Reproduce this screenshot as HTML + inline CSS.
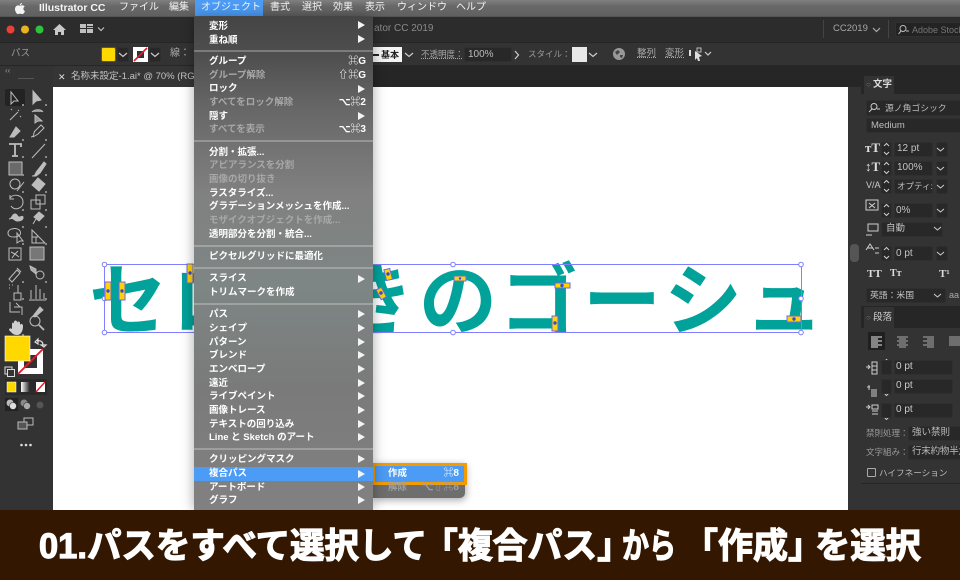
<!DOCTYPE html>
<html lang="ja"><head><meta charset="utf-8"><title>Illustrator</title>
<style>
html,body{margin:0;padding:0;background:#333}
#p{position:relative;width:960px;height:580px;overflow:hidden;background:#323232;font-family:"Liberation Sans","Noto Sans CJK JP",sans-serif;font-size:10px;color:#ccc;filter:blur(.3px)}
#p div,#p span.a{position:absolute}
.t{position:absolute;white-space:nowrap;line-height:14px}
.mb{top:1px;color:#f4f4f4;font-size:10px;font-weight:bold}
.m{position:absolute;left:15px;margin-top:1px;white-space:nowrap;line-height:14px;font-size:9.5px;font-weight:bold;color:#fff}
.d{color:#a8a8a8}
.s{position:absolute;right:7px;margin-top:1px;white-space:nowrap;line-height:14px;font-size:10px;font-weight:bold;color:#fff}
.ar{position:absolute;left:164px;width:0;height:0;border-left:7px solid #f4f4f4;border-top:4px solid transparent;border-bottom:4px solid transparent}
.sep{position:absolute;left:0;width:179px;height:2px;background:rgba(255,255,255,.26)}
.f{background:#282828;border:1px solid #2f2f2f;box-sizing:border-box;border-radius:2px}
.rt{position:absolute;white-space:nowrap;line-height:14px;font-size:10px;color:#c8c8c8}
</style></head><body>
<div id="p">

<!-- tabs row & canvas -->
<div style="left:0;top:66px;width:960px;height:21px;background:#262626"></div>
<div style="left:53px;top:66px;width:320px;height:21px;background:#353535"></div>
<div class="t" style="left:58px;top:70px;font-size:9px;color:#ddd">✕</div>
<div class="t" style="left:71px;top:70px;font-size:9.5px;color:#c4c4c4">名称未設定-1.ai* @ 70% (RGB/GPU プレビュー)</div>
<div style="left:53px;top:87px;width:795px;height:423px;background:#fff"></div>
<div style="left:848px;top:87px;width:13px;height:423px;background:#333"></div>
<div style="left:850px;top:244px;width:9px;height:18px;background:#555;border-radius:4px"></div>

<!-- artwork -->
<svg style="position:absolute;left:0;top:0" width="960" height="580" viewBox="0 0 960 580">
<text y="328" x="89 172 255 336 419 500 583 664 745" font-size="78" font-family="Liberation Sans,Noto Sans CJK JP,sans-serif" font-weight="700" fill="#00a29a">セロ弾きのゴーシュ</text>
<rect x="104.500" y="264.500" width="697" height="68" fill="none" stroke="#7f7fff" stroke-width="1"/>
<g fill="#fff" stroke="#7f7fff" stroke-width="1">
<circle cx="104.500" cy="264.500" r="2.300"/><circle cx="104.500" cy="298.500" r="2.300"/><circle cx="104.500" cy="332.500" r="2.300"/>
<circle cx="453" cy="264.500" r="2.300"/><circle cx="453" cy="332.500" r="2.300"/>
<circle cx="801" cy="264.500" r="2.300"/><circle cx="801" cy="298.500" r="2.300"/><circle cx="801" cy="332.500" r="2.300"/>
</g>
<g fill="#ffd400" stroke="#6a6ae8" stroke-width="1">
<rect x="105" y="282" width="6" height="18"/><rect x="119" y="282" width="6" height="18"/><rect x="187" y="264" width="6" height="19"/>
<rect x="385" y="269" width="6" height="11" transform="rotate(-14 388 274)"/><rect x="378" y="288" width="6" height="11" transform="rotate(-28 381 293)"/>
<rect x="454" y="276" width="12" height="5"/><rect x="555" y="283" width="15" height="5"/><rect x="552" y="316" width="6" height="15"/><rect x="787" y="316" width="14" height="6"/>
</g>
<g fill="#3a4ad8">
<circle cx="108" cy="291" r="1.700"/><circle cx="122" cy="291" r="1.700"/><circle cx="190" cy="273" r="1.700"/><circle cx="388" cy="274" r="1.700"/><circle cx="381" cy="293" r="1.700"/><circle cx="460" cy="278.500" r="1.200"/><circle cx="562" cy="285.500" r="1.700"/><circle cx="555" cy="323" r="1.700"/><circle cx="794" cy="319" r="1.700"/>
</g>
</svg>

<!-- app bar -->
<div style="left:0;top:17px;width:960px;height:25px;background:#2c2c2c"></div>
<div style="left:0;top:42px;width:960px;height:24px;background:#333;border-top:1px solid #262626;border-bottom:1px solid #262626;box-sizing:border-box"></div>
<svg style="position:absolute;left:0;top:17px" width="120" height="25"><circle cx="10.500" cy="12.500" r="4" fill="#e8413a"/><circle cx="25" cy="12.500" r="4" fill="#e9b320"/><circle cx="39.500" cy="12.500" r="4" fill="#2fc23c"/><path d="M53 13l6.500-6 6.500 6h-2v5h-3v-3h-3v3h-3v-5z" fill="#c8c8c8"/><path d="M80 7h6v4h-6zM87 7h6v2h-6zM87 10h6v1h-6zM80 12h6v4h-6zM87 12h6v4h-6z" fill="#c0c0c0"/><path d="M98 10.500l3 3 3-3" fill="none" stroke="#bbb" stroke-width="1.200"/></svg>
<div class="t" style="left:374px;top:22px;color:#8a8a8a;font-size:10px">ator CC 2019</div>
<div style="left:823px;top:20px;width:1px;height:18px;background:#444"></div>
<div class="t" style="left:833px;top:22px;color:#a8a8a8;font-size:9.500px">CC2019</div>
<svg style="position:absolute;left:872px;top:26px" width="10" height="8"><path d="M1 2l3.500 3.500L8 2" fill="none" stroke="#aaa" stroke-width="1.200"/></svg>
<div style="left:888px;top:20px;width:1px;height:18px;background:#444"></div>
<div class="f" style="left:895px;top:22px;width:70px;height:15px;background:#232323;border-color:#303030"></div>
<svg style="position:absolute;left:897px;top:24px" width="14" height="12"><circle cx="6" cy="4.500" r="3" fill="none" stroke="#bbb"/><path d="M4 7L1.500 10M9 7h3" stroke="#bbb" fill="none"/></svg>
<div class="t" style="left:912px;top:23px;color:#777;font-size:9px">Adobe Stock</div>

<!-- control bar -->
<div class="t" style="left:11px;top:47px;color:#999;font-size:9.500px">パス</div>
<div class="f" style="left:101px;top:47px;width:15px;height:15px;background:#ffd800;border-color:#555"></div>
<div class="f" style="left:117px;top:47px;width:12px;height:15px"></div>
<svg style="position:absolute;left:118px;top:52px" width="10" height="7"><path d="M1 1l4 3.500L9 1" fill="none" stroke="#ccc" stroke-width="1.200"/></svg>
<svg style="position:absolute;left:133px;top:47px" width="15" height="15"><rect width="15" height="15" fill="#fff"/><rect x="4" y="4" width="7" height="7" fill="#333"/><path d="M1 14L14 1" stroke="#e5192b" stroke-width="1.600"/></svg>
<div class="f" style="left:149px;top:47px;width:12px;height:15px"></div>
<svg style="position:absolute;left:150px;top:52px" width="10" height="7"><path d="M1 1l4 3.500L9 1" fill="none" stroke="#ccc" stroke-width="1.200"/></svg>
<div class="t" style="left:170px;top:47px;color:#aaa;font-size:10px">線：</div>
<div style="left:372px;top:47px;width:30px;height:15px;background:#f4f4f4"></div>
<div class="t" style="left:381px;top:48px;color:#222;font-size:9px;font-weight:bold">基本</div>
<div style="left:373px;top:54px;width:6px;height:2px;background:#222"></div>
<svg style="position:absolute;left:404px;top:52px" width="10" height="7"><path d="M1 1l4 3.500L9 1" fill="none" stroke="#ccc" stroke-width="1.200"/></svg>
<div class="t" style="left:421px;top:47px;color:#a8a8a8;font-size:8.500px;text-decoration:underline dotted">不透明度：</div>
<div class="f" style="left:464px;top:47px;width:48px;height:15px"></div>
<div class="t" style="left:468px;top:48px;color:#bbb;font-size:10px">100%</div>
<svg style="position:absolute;left:513px;top:50px" width="8" height="10"><path d="M2 1l3.500 4L2 9" fill="none" stroke="#ccc" stroke-width="1.200"/></svg>
<div class="t" style="left:528px;top:47px;color:#999;font-size:8.500px">スタイル：</div>
<div style="left:572px;top:47px;width:15px;height:15px;background:#e8e8e8"></div>
<svg style="position:absolute;left:588px;top:52px" width="10" height="7"><path d="M1 1l4 3.500L9 1" fill="none" stroke="#ccc" stroke-width="1.200"/></svg>
<svg style="position:absolute;left:612px;top:47px" width="14" height="14"><circle cx="7" cy="7" r="6" fill="#999"/><path d="M3 5l3-2 2 2-3 3zM8 8l3 0-1 3-2-1z" fill="#444"/></svg>
<div class="t" style="left:637px;top:47px;color:#aaa;font-size:9.500px;text-decoration:underline dotted">整列</div>
<div class="t" style="left:665px;top:47px;color:#aaa;font-size:9.500px;text-decoration:underline dotted">変形</div>
<svg style="position:absolute;left:688px;top:47px" width="26" height="15"><path d="M1 3h2v6H1zM7 4l7 5-3 1 1 4-2 0-1-3-2 2z" fill="#ddd"/><rect x="9" y="1" width="4" height="4" fill="none" stroke="#bbb"/><path d="M17 5l3 3 3-3" fill="none" stroke="#ccc" stroke-width="1.200"/></svg>

<!-- left toolbar -->
<div style="left:0;top:66px;width:53px;height:444px;background:#333"></div>
<div class="t" style="left:5px;top:64px;font-size:8px;color:#999">‹‹</div>
<div style="left:18px;top:78px;width:16px;height:1px;background:#555"></div>
<div style="left:5px;top:89px;width:20px;height:17px;background:#232323;border-radius:2px"></div>
<svg style="position:absolute;left:0;top:85px" width="53" height="380" viewBox="0 0 53 380" fill="none" stroke="#bdbdbd" stroke-width="1">
<path d="M11 7l0 12 3-3 4 0z"/><path d="M33 6l0 13 3-3 5-1z" fill="#bdbdbd"/>
<path d="M10 35l8-8M18 25l1 1M11 24l1 1M20 31l1 1"/><path d="M32 27c3-3 9-3 11 0M35 30l0 8 3-2 4 0z" fill="#999"/>
<path d="M10 52l6-10 4 4-6 6z" fill="#bdbdbd"/><path d="M31 52c4 0 2-5 4-6l6-6 3 3-6 6-5 3"/>
<path d="M9 59h12v3M15 59v12M12 71h6" stroke-width="1.800"/><path d="M32 73l13-14"/>
<rect x="9" y="77" width="13" height="13" fill="#6a6a6a"/><path d="M32 91c4 0 3-3 5-5l7-9 2 2-6 9-4 3z" fill="#bdbdbd"/>
<circle cx="15" cy="99" r="5" /><path d="M17 106l7-9"/><path d="M32 100l6-7 7 6-6 7z" fill="#bdbdbd"/>
<path d="M10 113c4-5 13-3 13 4s-9 9-12 4M10 110v4h4"/><rect x="31" y="115" width="9" height="9"/><rect x="36" y="110" width="9" height="9"/>
<path d="M9 134c3 0 3-5 6-5s2 4 5 3 3-1 3 1-3 3-6 3-3-4-8-2z" fill="#bdbdbd"/><path d="M34 132l5-5 5 4-5 5zM36 134l-3 5" fill="#bdbdbd"/>
<path d="M8 148c0-5 10-6 12-2s-2 6-6 6-6-1-6-4zM17 148v10l3-2 3 0z"/><path d="M32 158v-13l13 13zM32 152h6M36 152v6"/>
<rect x="9" y="163" width="12" height="12"/><path d="M11 167l4 2 3-3M12 173l3-4 4 3"/><rect x="30" y="162" width="14" height="13" fill="#777"/>
<path d="M9 194l8-9 3 3-8 9zM17 183l4 4"/><path d="M30 181l6 3v5l-5-4z" fill="#aaa"/><circle cx="40" cy="190" r="4"/>
<path d="M18 200v8M14 208h7v7h-7z" /><path d="M9 200h1M12 200h1M9 203h1"/><path d="M31 214v-9M36 214v-14M40 214v-10M44 214v-6M29 215h17"/>
<path d="M10 217v10h10M14 222h8v8M20 222l-4-4"/><path d="M33 231l7-9 3 3-8 7z" fill="#bdbdbd"/>
<path d="M12 246v-7c0-2 2-2 2 0v-2c0-2 3-2 3 0v1c0-2 3-2 3 0v2c1-2 3-1 3 1 0 5-2 9-6 9s-5-2-8-5c0-2 2-2 3-1z" fill="#cfcfcf" stroke="none"/><circle cx="35" cy="236" r="5"/><path d="M39 240l5 5" stroke-width="1.800"/>
</svg>
<svg style="position:absolute;left:0;top:85px" width="53" height="260" fill="#8a8a8a"><path d="M22 19h2v2h-2zM45 19h2v2h-2zM22 54h2v2h-2zM45 54h2v2h-2zM22 71h2v2h-2zM45 71h2v2h-2zM22 89h2v2h-2zM45 89h2v2h-2zM22 106h2v2h-2zM45 106h2v2h-2zM22 124h2v2h-2zM45 124h2v2h-2zM22 141h2v2h-2zM45 141h2v2h-2zM22 158h2v2h-2zM45 158h2v2h-2zM22 196h2v2h-2zM45 196h2v2h-2zM22 213h2v2h-2zM45 213h2v2h-2zM22 249h2v2h-2z"/></svg>

<!-- fill stroke -->
<svg style="position:absolute;left:0;top:330px" width="53" height="125">
<rect x="18" y="19" width="25" height="25" fill="#fff"/><rect x="24" y="25" width="13" height="13" fill="#333"/><path d="M18 44L43 19" stroke="#e5192b" stroke-width="1.800"/>
<rect x="5" y="6" width="25" height="25" fill="#ffd800" stroke="#fff" stroke-width=".6"/>
<path d="M37 11c4-1 6 1 6 4M35 12l3-3v5zM44 17l-3-2h5z" fill="none" stroke="#ddd" stroke-width="1.200"/>
<rect x="5" y="37" width="7" height="7" fill="none" stroke="#ddd"/><rect x="7.500" y="39.500" width="7" height="7" fill="#333" stroke="#ddd"/>
<rect x="5" y="49" width="42" height="16" fill="#2a2a2a"/>
<rect x="7" y="52" width="9" height="10" fill="#ffd800" stroke="#fff" stroke-width=".5"/>
<defs><linearGradient id="g"><stop offset="0" stop-color="#fff"/><stop offset="1" stop-color="#222"/></linearGradient></defs>
<rect x="21" y="52" width="9" height="10" fill="url(#g)"/>
<rect x="36" y="52" width="9" height="10" fill="#fff"/><path d="M36 62l9-10" stroke="#e5192b" stroke-width="1.400"/>
<rect x="5" y="68" width="13" height="13" fill="#222"/>
<circle cx="10" cy="73" r="3.500" fill="#bbb"/><circle cx="13" cy="76" r="3.500" fill="#ddd" stroke="#333" stroke-width=".6"/>
<circle cx="24" cy="73" r="3.500" fill="#888"/><circle cx="27" cy="76" r="3.500" fill="#aaa" stroke="#333" stroke-width=".6"/>
<circle cx="40" cy="75" r="3.500" fill="#555"/>
<rect x="24" y="88" width="9" height="7" fill="#333" stroke="#bbb"/><rect x="18" y="92" width="9" height="7" fill="#555" stroke="#bbb"/>
<circle cx="21.500" cy="115" r="1.300" fill="#ddd"/><circle cx="26" cy="115" r="1.300" fill="#ddd"/><circle cx="30.500" cy="115" r="1.300" fill="#ddd"/>
</svg>

<!-- right panel -->
<div style="left:861px;top:66px;width:99px;height:444px;background:#333"></div>
<div style="left:861px;top:66px;width:99px;height:10px;background:#262626"></div>
<div style="left:861px;top:76px;width:99px;height:18px;background:#262626"></div>
<div style="left:864px;top:76px;width:30px;height:18px;background:#333"></div>
<div class="rt" style="left:866px;top:78px;font-size:8px;color:#777">○</div>
<div class="rt" style="left:873px;top:78px;font-size:9.500px;color:#ddd;font-weight:bold">文字</div>
<div class="f" style="left:866px;top:100px;width:96px;height:16px"></div>
<svg style="position:absolute;left:867px;top:102px" width="16" height="12"><circle cx="7" cy="4.500" r="3" fill="none" stroke="#ccc"/><path d="M5 7L2 10M10 7h3" stroke="#ccc" fill="none"/></svg>
<div class="rt" style="left:885px;top:101px;font-size:8.800px;color:#bbb">源ノ角ゴシック</div>
<div class="f" style="left:866px;top:118px;width:96px;height:15px"></div>
<div class="rt" style="left:871px;top:119px;font-size:9.500px;color:#bbb">Medium</div>

<div class="f" style="left:881px;top:142px;width:11px;height:15px"></div><div class="f" style="left:894px;top:142px;width:39px;height:15px"></div><div class="f" style="left:936px;top:142px;width:12px;height:15px"></div>
<div class="f" style="left:881px;top:161px;width:11px;height:15px"></div><div class="f" style="left:894px;top:161px;width:39px;height:15px"></div><div class="f" style="left:936px;top:161px;width:12px;height:15px"></div>
<div class="f" style="left:881px;top:179px;width:11px;height:15px"></div><div class="f" style="left:894px;top:179px;width:39px;height:15px"></div><div class="f" style="left:936px;top:179px;width:12px;height:15px"></div>
<div class="f" style="left:881px;top:203px;width:11px;height:15px"></div><div class="f" style="left:894px;top:203px;width:39px;height:15px"></div><div class="f" style="left:936px;top:203px;width:12px;height:15px"></div>
<div class="f" style="left:881px;top:222px;width:62px;height:15px"></div>
<div class="f" style="left:881px;top:246px;width:11px;height:15px"></div><div class="f" style="left:894px;top:246px;width:39px;height:15px"></div><div class="f" style="left:936px;top:246px;width:12px;height:15px"></div>
<div class="f" style="left:866px;top:288px;width:80px;height:15px"></div>
<div class="rt" style="left:897px;top:142px;color:#c4c4c4">12 pt</div>
<div class="rt" style="left:897px;top:161px;color:#c4c4c4">100%</div>
<div class="rt" style="left:897px;top:179px;color:#c4c4c4;font-size:8.500px">オプティ:</div>
<div class="rt" style="left:896px;top:204px;color:#c4c4c4">0%</div>
<div class="rt" style="left:886px;top:222px;color:#c4c4c4;font-size:9.500px">自動</div>
<div class="rt" style="left:896px;top:247px;color:#c4c4c4">0 pt</div>
<div class="rt" style="left:870px;top:288px;color:#c4c4c4;font-size:8.800px">英語：米国</div>
<div class="rt" style="left:949px;top:288px;color:#aaa;font-size:9px">aa</div>
<div class="rt" style="left:867px;top:267px;font-family:'Liberation Serif',serif;font-weight:bold;font-size:11px;color:#ddd">TT</div>
<div class="rt" style="left:890px;top:267px;font-family:'Liberation Serif',serif;font-weight:bold;font-size:10px;color:#ddd">Tт</div>
<div class="rt" style="left:939px;top:267px;font-family:'Liberation Serif',serif;font-weight:bold;font-size:11px;color:#ddd">T¹</div>
<div class="rt" style="left:865px;top:141px;font-family:'Liberation Serif',serif;font-weight:bold;font-size:13px;color:#ddd">тT</div>
<div class="rt" style="left:865px;top:160px;font-family:'Liberation Serif',serif;font-weight:bold;font-size:13px;color:#ddd">↕T</div>
<div class="rt" style="left:866px;top:178px;font-size:9px;color:#ccc">V/A</div>
<svg style="position:absolute;left:860px;top:140px" width="100" height="170" fill="none" stroke="#cfcfcf" stroke-width="1">
<path d="M24 6l2.500-2.500L29 6M24 12l2.500 2.500L29 12"/><path d="M24 25l2.500-2.500L29 25M24 31l2.500 2.500L29 31"/><path d="M24 43l2.500-2.500L29 43M24 49l2.500 2.500L29 49"/><path d="M24 67l2.500-2.500L29 67M24 73l2.500 2.500L29 73"/><path d="M24 110l2.500-2.500L29 110M24 116l2.500 2.500L29 116"/>
<path d="M77 8l3.500 3L84 8M77 27l3.500 3L84 27M77 45l3.500 3L84 45M77 69l3.500 3L84 69M74 87l3.500 3L81 87M77 112l3.500 3L84 112M74 154l3.500 3L81 154"/>
<path d="M6 60h12v10H6zM9 63l6 5M15 63l-6 5M8 84h10v7H8zM6 95h6M6 110l4-6 4 6M7 108h6M15 108h4M15 113h4"/>
</svg>

<div style="left:861px;top:306px;width:99px;height:204px;background:#333;border-top:1px solid #262626"></div>
<div style="left:861px;top:307px;width:99px;height:21px;background:#262626"></div>
<div style="left:864px;top:307px;width:30px;height:21px;background:#333"></div>
<div class="rt" style="left:873px;top:311px;font-size:9.500px;color:#ccc">段落</div>
<div class="rt" style="left:866px;top:311px;font-size:8px;color:#777">○</div>
<div style="left:868px;top:332px;width:17px;height:18px;background:#1f1f1f;border-radius:1px"></div>
<svg style="position:absolute;left:860px;top:330px" width="100" height="90" fill="none" stroke="#e8e8e8" stroke-width="1">
<path d="M11 7h11M11 9h7M11 11h11M11 13h7M11 15h11M11 17h7"/>
<path stroke="#aaa" d="M37 7h11M39 9h7M37 11h11M39 13h7M37 15h11M39 17h7M63 7h11M67 9h7M63 11h11M67 13h7M63 15h11M67 17h7M89 7h11M89 9h11M89 11h11M89 13h11M89 15h11"/>
<path stroke="#ccc" d="M6 37h4M8 35l2 2-2 2M12 32h5v12h-5zM12 36h5M12 40h5M7 57h3M9 55v5M11 60h6M11 62h6M11 64h6M11 66h6M6 77h4M8 75l2 2-2 2M12 75h6v4h-6zM12 81h6M12 84h6"/>
<path stroke="#ccc" d="M24 32l2.500-2.500L29 32M24 38l2.500 2.500L29 38M24 57l2.500-2.500L29 57M24 63l2.500 2.500L29 63M24 81l2.500-2.500L29 81M24 87l2.500 2.500L29 87"/>
</svg>
<div class="f" style="left:881px;top:360px;width:11px;height:15px"></div><div class="f" style="left:894px;top:360px;width:59px;height:15px"></div>
<div class="f" style="left:881px;top:379px;width:11px;height:15px"></div><div class="f" style="left:894px;top:379px;width:59px;height:15px"></div>
<div class="f" style="left:881px;top:403px;width:11px;height:15px"></div><div class="f" style="left:894px;top:403px;width:59px;height:15px"></div>
<div class="rt" style="left:896px;top:360px;color:#ccc">0 pt</div>
<div class="rt" style="left:896px;top:379px;color:#ccc">0 pt</div>
<div class="rt" style="left:896px;top:403px;color:#ccc">0 pt</div>
<div class="f" style="left:908px;top:426px;width:60px;height:15px"></div>
<div class="f" style="left:908px;top:445px;width:60px;height:15px"></div>
<div class="rt" style="left:866px;top:426px;font-size:8.500px;color:#999">禁則処理：</div>
<div class="rt" style="left:912px;top:426px;font-size:9.500px;color:#bbb">強い禁則</div>
<div class="rt" style="left:866px;top:445px;font-size:8.500px;color:#999">文字組み：</div>
<div class="rt" style="left:912px;top:445px;font-size:9.500px;color:#bbb;letter-spacing:-.2px">行末約物半角</div>
<div style="left:867px;top:468px;width:7px;height:7px;border:1px solid #aaa;border-radius:1px"></div>
<div class="rt" style="left:879px;top:466px;font-size:8.600px;color:#bbb">ハイフネーション</div>
<div style="left:861px;top:483px;width:99px;height:1px;background:#262626"></div>

<!-- menubar -->
<div style="left:0;top:0;width:960px;height:17px;background:linear-gradient(#808080,#686868 40%,#606060);border-bottom:1px solid #555;box-sizing:border-box"></div>
<svg style="position:absolute;left:14px;top:2px" width="12" height="13"><path d="M8 1c0 1-1 2.300-2.200 2.300C5.700 2.200 6.900 1 8 1zM6 3.700c.7 0 1.300-.5 2.300-.5 1 0 1.900.5 2.400 1.300-2 1.300-1.600 3.800.3 4.600-.5 1.300-1.600 3-2.700 3-.8 0-1.100-.5-2.100-.5s-1.300.5-2.100.5C2.800 12.100 1 9.500 1 7.200c0-2.300 1.500-3.800 3-3.800.8 0 1.400.5 2 .3z" fill="#f4f4f4"/></svg>
<div class="t mb" style="left:39px;font-size:10.500px">Illustrator CC</div>
<div class="t mb" style="left:119px;font-weight:normal">ファイル</div>
<div class="t mb" style="left:169px;font-weight:normal">編集</div>
<div style="left:195px;top:0;width:68px;height:16px;background:#4c9bf5"></div>
<div class="t mb" style="left:201px;font-weight:normal">オブジェクト</div>
<div class="t mb" style="left:270px;font-weight:normal">書式</div>
<div class="t mb" style="left:302px;font-weight:normal">選択</div>
<div class="t mb" style="left:333px;font-weight:normal">効果</div>
<div class="t mb" style="left:365px;font-weight:normal">表示</div>
<div class="t mb" style="left:397px;font-weight:normal">ウィンドウ</div>
<div class="t mb" style="left:456px;font-weight:normal">ヘルプ</div>

<!-- submenu -->
<div style="left:373px;top:463px;width:92px;height:35px;background:#6e6e6e;border-radius:0 0 5px 0;box-shadow:1px 2px 8px rgba(0,0,0,.35)"></div>
<div style="left:372px;top:463px;width:95px;height:22px;background:#4c9bf5;border:3px solid #f59b00;box-sizing:border-box"></div>
<div class="t" style="left:388px;top:467px;color:#fff;font-size:9.500px;font-weight:bold">作成</div>
<div class="t" style="right:501px;top:467px;color:#fff;font-size:10px;font-weight:bold">⌘8</div>
<div class="t" style="left:388px;top:481px;color:#a0a0a0;font-size:9.500px;font-weight:bold">解除</div>
<div class="t" style="right:501px;top:481px;color:#a0a0a0;font-size:10px;font-weight:bold">⌥⇧⌘8</div>

<!-- object menu -->
<div style="left:194px;top:17px;width:179px;height:493px;background:linear-gradient(#454545 0,#4f4f4f 8%,#666 18%,#818181 36%,#7d8684 55%,#7a7a7a 75%,#818181 100%);box-shadow:0 0 12px rgba(0,0,0,.35)">
<span class="m" style="top:2px">変形</span><i class="ar" style="top:4px"></i>
<span class="m" style="top:16px">重ね順</span><i class="ar" style="top:18px"></i>
<i class="sep" style="top:33px"></i>
<span class="m" style="top:37px">グループ</span><span class="s" style="top:37px">⌘G</span>
<span class="m d" style="top:51px">グループ解除</span><span class="s d" style="top:51px">⇧⌘G</span>
<span class="m" style="top:64px">ロック</span><i class="ar" style="top:68px"></i>
<span class="m d" style="top:78px">すべてをロック解除</span><span class="s d" style="top:78px">⌥⌘2</span>
<span class="m" style="top:92px">隠す</span><i class="ar" style="top:95px"></i>
<span class="m d" style="top:105px">すべてを表示</span><span class="s d" style="top:105px">⌥⌘3</span>
<i class="sep" style="top:123px"></i>
<span class="m" style="top:128px">分割・拡張...</span>
<span class="m d" style="top:141px">アピアランスを分割</span>
<span class="m d" style="top:155px">画像の切り抜き</span>
<span class="m" style="top:169px">ラスタライズ...</span>
<span class="m" style="top:182px">グラデーションメッシュを作成...</span>
<span class="m d" style="top:196px">モザイクオブジェクトを作成...</span>
<span class="m" style="top:210px">透明部分を分割・統合...</span>
<i class="sep" style="top:228px"></i>
<span class="m" style="top:232px">ピクセルグリッドに最適化</span>
<i class="sep" style="top:250px"></i>
<span class="m" style="top:254px">スライス</span><i class="ar" style="top:258px"></i>
<span class="m" style="top:268px">トリムマークを作成</span>
<i class="sep" style="top:286px"></i>
<span class="m" style="top:290px">パス</span><i class="ar" style="top:293px"></i>
<span class="m" style="top:304px">シェイプ</span><i class="ar" style="top:307px"></i>
<span class="m" style="top:318px">パターン</span><i class="ar" style="top:321px"></i>
<span class="m" style="top:331px">ブレンド</span><i class="ar" style="top:334px"></i>
<span class="m" style="top:345px">エンベロープ</span><i class="ar" style="top:348px"></i>
<span class="m" style="top:359px">遠近</span><i class="ar" style="top:362px"></i>
<span class="m" style="top:372px">ライブペイント</span><i class="ar" style="top:375px"></i>
<span class="m" style="top:386px">画像トレース</span><i class="ar" style="top:389px"></i>
<span class="m" style="top:400px">テキストの回り込み</span><i class="ar" style="top:403px"></i>
<span class="m" style="top:413px">Line と Sketch のアート</span>
<i class="ar" style="top:416px"></i>
<i class="sep" style="top:431px"></i>
<span class="a" style="left:0;top:450px;width:179px;height:14px;background:#4c9bf5"></span>
<span class="m" style="top:435px">クリッピングマスク</span><i class="ar" style="top:438px"></i>
<span class="m" style="top:449px">複合パス</span><i class="ar" style="top:453px"></i>
<span class="m" style="top:463px">アートボード</span><i class="ar" style="top:466px"></i>
<span class="m" style="top:476px">グラフ</span><i class="ar" style="top:479px"></i>
</div>

<!-- banner -->
<div style="left:0;top:510px;width:960px;height:70px;background:#331700"></div>
<svg style="position:absolute;left:0;top:510px" width="960" height="70" font-size="35" font-weight="bold" fill="#fff" stroke="#fff" stroke-width="1.200" font-family="Liberation Sans,Noto Sans CJK JP,sans-serif">
<text x="39" y="48" textLength="388" lengthAdjust="spacingAndGlyphs">01.パスをすべて選択して</text>
<text x="423" y="48" textLength="209" lengthAdjust="spacingAndGlyphs">「複合パス」</text>
<text x="622" y="48" textLength="54" lengthAdjust="spacingAndGlyphs">から</text>
<text x="683" y="48" textLength="140" lengthAdjust="spacingAndGlyphs">「作成」</text>
<text x="815" y="48" textLength="106" lengthAdjust="spacingAndGlyphs">を選択</text>
</svg>
</div>
</body></html>
